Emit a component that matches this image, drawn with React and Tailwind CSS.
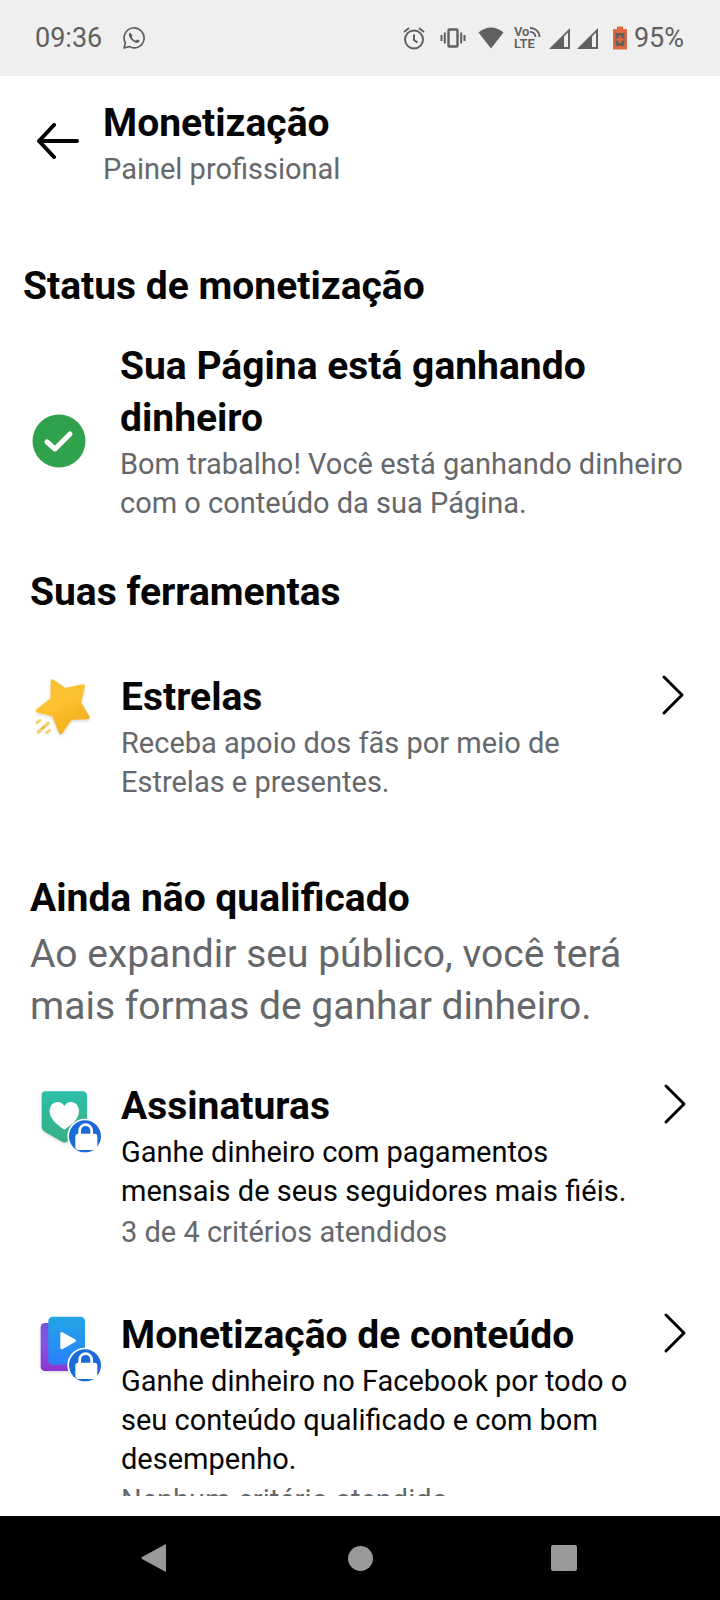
import React from "react";

const TOOLS = [
  {
    id: "estrelas",
    title: "Estrelas",
    description: "Receba apoio dos fãs por meio de Estrelas e presentes.",
    muted: true,
    Icon: StarIcon,
  },
];

const NOT_QUALIFIED = [
  {
    id: "assinaturas",
    title: "Assinaturas",
    description:
      "Ganhe dinheiro com pagamentos mensais de seus seguidores mais fiéis.",
    criteria: "3 de 4 critérios atendidos",
    Icon: SubscriptionIcon,
  },
  {
    id: "conteudo",
    title: "Monetização de conteúdo",
    description:
      "Ganhe dinheiro no Facebook por todo o seu conteúdo qualificado e com bom desempenho.",
    criteria: "Nenhum critério atendido",
    Icon: ContentIcon,
  },
];

function StarIcon() {
  return (
    <svg className="size-[74px] shrink-0" viewBox="30 30 222 222" aria-hidden="true">
      <defs>
        <linearGradient id="star" x1="0" y1="0" x2="0.6" y2="1">
          <stop offset="0" stopColor="#f6c035" />
          <stop offset="0.5" stopColor="#fdc22f" />
          <stop offset="1" stopColor="#f3b01e" />
        </linearGradient>
        <filter id="starShadow" x="-20%" y="-20%" width="140%" height="140%">
          <feDropShadow dx="0" dy="4" stdDeviation="4" floodColor="#000" floodOpacity="0.18" />
        </filter>
      </defs>
      <path
        d="M98 61 L134 87 L189 76 L177 125 L203 169 L151 171 L122 213 L101 161 L54 149 L97 116 Z"
        fill="url(#star)"
        stroke="url(#star)"
        strokeWidth="12"
        strokeLinejoin="round"
        filter="url(#starShadow)"
      />
      <g stroke="#f8cf78" strokeWidth="9" strokeLinecap="round">
        <path d="M51 185 L60 178" />
        <path d="M55 213 L84 187" strokeWidth="11" />
        <path d="M80 215 L89 208" />
      </g>
      <path d="M66 203 L74 196" stroke="#ee9c4e" strokeWidth="4" />
    </svg>
  );
}

// blue padlock badge shared by the locked tools
function LockBadge() {
  return (
    <g>
      <circle cx="195" cy="199" r="53" fill="#fff" />
      <circle cx="195" cy="199" r="48" fill="#1a6ad8" />
      <path
        d="M179 194 V182 A18 18 0 0 1 215 182 V194"
        fill="none"
        stroke="#fff"
        strokeWidth="8"
      />
      <rect x="166" y="191" width="66" height="49" rx="9" fill="#fff" />
    </g>
  );
}

function SubscriptionIcon() {
  return (
    <svg className="size-[74px] shrink-0" viewBox="30 30 222 222" aria-hidden="true">
      <defs>
        <linearGradient id="tag" x1="0" y1="0" x2="0" y2="1">
          <stop offset="0" stopColor="#2cbfa9" />
          <stop offset="1" stopColor="#35b084" />
        </linearGradient>
        <filter id="tagShadow" x="-20%" y="-20%" width="140%" height="140%">
          <feDropShadow dx="0" dy="4" stdDeviation="4" floodColor="#000" floodOpacity="0.15" />
        </filter>
      </defs>
      <path
        d="M76 64 H187 Q201 64 201 78 V175 Q201 186 191 190 L141 215 Q132 220 123 214 L75 186 Q65 180 65 169 V76 Q65 64 76 64 Z"
        fill="url(#tag)"
        filter="url(#tagShadow)"
      />
      <path
        d="M133 179 C118 169 89 150 89 124 C89 107 99 96 113 96 C122 96 129 101 133 108 C137 101 144 96 153 96 C167 96 177 107 177 124 C177 150 148 169 133 179 Z"
        fill="#fff"
      />
      <LockBadge />
    </svg>
  );
}

function ContentIcon() {
  return (
    <svg className="size-[74px] shrink-0" viewBox="30 30 222 222" aria-hidden="true">
      <defs>
        <linearGradient id="cardBack" x1="0" y1="0" x2="0" y2="1">
          <stop offset="0" stopColor="#7558e0" />
          <stop offset="0.5" stopColor="#8650dc" />
          <stop offset="1" stopColor="#8c35cf" />
        </linearGradient>
        <linearGradient id="cardFront" x1="0" y1="0" x2="0" y2="1">
          <stop offset="0" stopColor="#23a6e6" />
          <stop offset="1" stopColor="#2a80fb" />
        </linearGradient>
        <filter id="cardShadow" x="-20%" y="-20%" width="140%" height="140%">
          <feDropShadow dx="0" dy="4" stdDeviation="4" floodColor="#000" floodOpacity="0.15" />
        </filter>
      </defs>
      <rect x="62" y="72" width="108" height="144" rx="13" fill="url(#cardBack)" filter="url(#cardShadow)" />
      <rect x="85" y="53" width="110" height="144" rx="13" fill="url(#cardFront)" />
      <path
        d="M125 103 V147 L164 125 Z"
        fill="#fff"
        stroke="#fff"
        strokeWidth="8"
        strokeLinejoin="round"
      />
      <LockBadge />
    </svg>
  );
}

function Chevron() {
  return (
    <svg
      className="h-[42px] w-[26px] shrink-0"
      viewBox="0 0 26 42"
      fill="none"
      stroke="#000"
      strokeWidth="3"
      strokeLinecap="round"
      strokeLinejoin="round"
      aria-hidden="true"
    >
      <path d="M4 3 L22 21 L4 39" />
    </svg>
  );
}

function StatusBar() {
  return (
    <div className="flex h-[76px] shrink-0 items-center justify-between bg-[#efefef] pr-9 pl-[35px] text-[27px] leading-8 text-[#606060]">
      <div className="flex items-center gap-5">
        <span>09:36</span>
        <svg className="size-6" viewBox="0 0 24 24" fill="none" aria-label="WhatsApp">
          <path
            d="M2 22 L3.4 16.8 A10 10 0 1 1 7.2 20.6 Z"
            stroke="#606060"
            strokeWidth="1.7"
            strokeLinejoin="round"
          />
          <path
            d="M8.6 6.8 C8.2 6.5 7.6 6.8 7.2 7.4 C6.2 9 7.2 11.2 9.2 13.5 C11.4 16 14.2 17.4 16 16.8 C17.4 16.3 17.9 15.2 17.6 14.6 L15.2 13.4 C14.5 13.2 14.2 14.5 13.5 14.6 C12.3 14.3 10.3 12.5 9.7 11.2 C9.7 10.6 10.7 10.2 10.4 9.4 Z"
            fill="#606060"
          />
        </svg>
      </div>

      <div className="flex items-center">
        <svg className="mr-3.5 size-6" viewBox="0 0 24 24" fill="none" stroke="#606060" strokeWidth="2" aria-label="Alarme">
          <circle cx="12" cy="13.5" r="9" />
          <path d="M12 8.5 V14 L15.5 16.5 M2 6 L7 2 M22 6 L17 2" />
        </svg>
        <svg className="mr-3 h-6 w-[26px]" viewBox="0 0 26 24" fill="none" stroke="#606060" strokeWidth="2" aria-label="Vibrar">
          <rect x="8.5" y="3.5" width="9" height="17" rx="1" strokeWidth="2.4" />
          <path d="M1.5 9 V15 M4.8 6.5 V17.5 M24.5 9 V15 M21.2 6.5 V17.5" />
        </svg>
        <svg className="mr-2.5 h-6 w-[26px]" viewBox="0 0 26 24" aria-label="Wi-Fi">
          <path d="M0.5 6.5 Q13 -3.5 25.5 6.5 L13 22.5 Z" fill="#606060" />
        </svg>
        <div className="mr-1.5 flex w-7 flex-col text-[13px] leading-3 font-semibold">
          <span className="flex items-center">
            Vo
            <svg className="size-3" viewBox="0 0 12 12" fill="none" stroke="#606060" strokeWidth="1.8" aria-hidden="true">
              <path d="M1 2 A9 9 0 0 1 10.5 11 M1 6 A5 5 0 0 1 6.5 11" />
            </svg>
          </span>
          <span>LTE</span>
        </div>
        {["SIM 1", "SIM 2"].map((sim) => (
          <svg key={sim} className="mr-1 size-6" viewBox="0 0 24 24" aria-label={sim}>
            <path d="M1 23 L22 2 V23 Z M16 10.5 V21 H20 V6.5 Z" fill="#606060" fillRule="evenodd" />
          </svg>
        ))}
        <svg className="mr-1.5 ml-2 h-6 w-4" viewBox="0 0 16 24" aria-label="Bateria">
          <path d="M5 0.5 H11 V3 H15 V23.5 H1 V3 H5 Z" fill="#e0693f" />
          <rect x="3.5" y="7" width="9" height="13" fill="#606060" />
          <path d="M8 10 V17 M4.5 13.5 H11.5" stroke="#e0693f" strokeWidth="2.6" />
        </svg>
        <span>95%</span>
      </div>
    </div>
  );
}

function ToolRow({ tool }) {
  const { title, description, criteria, muted, Icon } = tool;

  return (
    <a href={`#${tool.id}`} className="flex items-start">
      <Icon />
      <div className="ml-[17px] min-w-0 flex-1">
        <h3 className="text-[39px] leading-[52px] font-bold">{title}</h3>
        <p
          className={
            muted
              ? "mt-px max-w-[520px] text-[29px] leading-[39px] text-[#65676b]"
              : "mt-px max-w-[520px] text-[29px] leading-[39px]"
          }
        >
          {description}
        </p>
        {criteria && (
          <p className="mt-0.5 text-[29px] leading-[39px] text-[#65676b]">{criteria}</p>
        )}
      </div>
      <div className="mt-[3px]">
        <Chevron />
      </div>
    </a>
  );
}

function NavBar() {
  return (
    <nav className="grid h-[84px] shrink-0 grid-cols-3 bg-black px-[54px]">
      <button type="button" aria-label="Voltar" className="flex items-center justify-center">
        <svg className="size-8" viewBox="0 0 32 32" fill="#999">
          <path d="M26 2 V30 L2 17 Q1 16 2 15 Z" />
        </svg>
      </button>
      <button type="button" aria-label="Início" className="flex items-center justify-center">
        <span className="size-[25px] rounded-full bg-[#999]" />
      </button>
      <button type="button" aria-label="Recentes" className="flex items-center justify-center">
        <span className="size-[26px] rounded-xs bg-[#999]" />
      </button>
    </nav>
  );
}

export default function App() {
  return (
    <div className="flex h-screen flex-col bg-white font-[Roboto,sans-serif] text-[#050505]">
      <StatusBar />

      <header className="flex shrink-0 items-start pt-[21px] pl-9">
        <button type="button" aria-label="Voltar" className="mt-[26px]">
          <svg
            className="h-9 w-11"
            viewBox="0 0 44 36"
            fill="none"
            stroke="#000"
            strokeWidth="4"
            strokeLinecap="round"
            strokeLinejoin="round"
          >
            <path d="M18 2 L3 18 L18 34 M3 18 H41" />
          </svg>
        </button>
        <div className="ml-[23px]">
          <h1 className="text-[39px] leading-[52px] font-bold">Monetização</h1>
          <p className="mt-px text-[29px] leading-[39px] text-[#65676b]">
            Painel profissional
          </p>
        </div>
      </header>

      <main className="mb-5 min-h-0 flex-1 overflow-hidden pt-[71px]">
        <section className="pr-8 pl-[23px]">
          <h2 className="text-[39px] leading-[52px] font-bold">
            Status de monetização
          </h2>
          <div className="mt-7 flex items-center pl-[9px]">
            <svg className="mt-[18px] size-[54px] shrink-0" viewBox="0 0 54 54" aria-hidden="true">
              <circle cx="27" cy="27" r="26.5" fill="#31a24c" />
              <path
                d="M15 28 L23 35 L38 20"
                fill="none"
                stroke="#fff"
                strokeWidth="5"
                strokeLinecap="round"
                strokeLinejoin="round"
              />
            </svg>
            <div className="ml-[34px]">
              <h3 className="text-[39px] leading-[52px] font-bold">
                Sua Página está ganhando dinheiro
              </h3>
              <p className="mt-px text-[29px] leading-[39px] text-[#65676b]">
                Bom trabalho! Você está ganhando dinheiro com o conteúdo da sua
                Página.
              </p>
            </div>
          </div>
        </section>

        <section className="mt-[43px] pr-[34px] pl-[30px]">
          <h2 className="text-[39px] leading-[52px] font-bold">
            Suas ferramentas
          </h2>
          <div className="mt-[53px]">
            {TOOLS.map((tool) => (
              <ToolRow key={tool.id} tool={tool} />
            ))}
          </div>
        </section>

        <section className="mt-[70px] pr-8 pl-[30px]">
          <h2 className="text-[39px] leading-[52px] font-bold">
            Ainda não qualificado
          </h2>
          <p className="mt-1 text-[39px] leading-[52px] text-[#65676b]">
            Ao expandir seu público, você terá mais formas de ganhar dinheiro.
          </p>
          <div className="mt-12 flex flex-col gap-[57px]">
            {NOT_QUALIFIED.map((tool) => (
              <ToolRow key={tool.id} tool={tool} />
            ))}
          </div>
        </section>
      </main>

      <NavBar />
    </div>
  );
}
